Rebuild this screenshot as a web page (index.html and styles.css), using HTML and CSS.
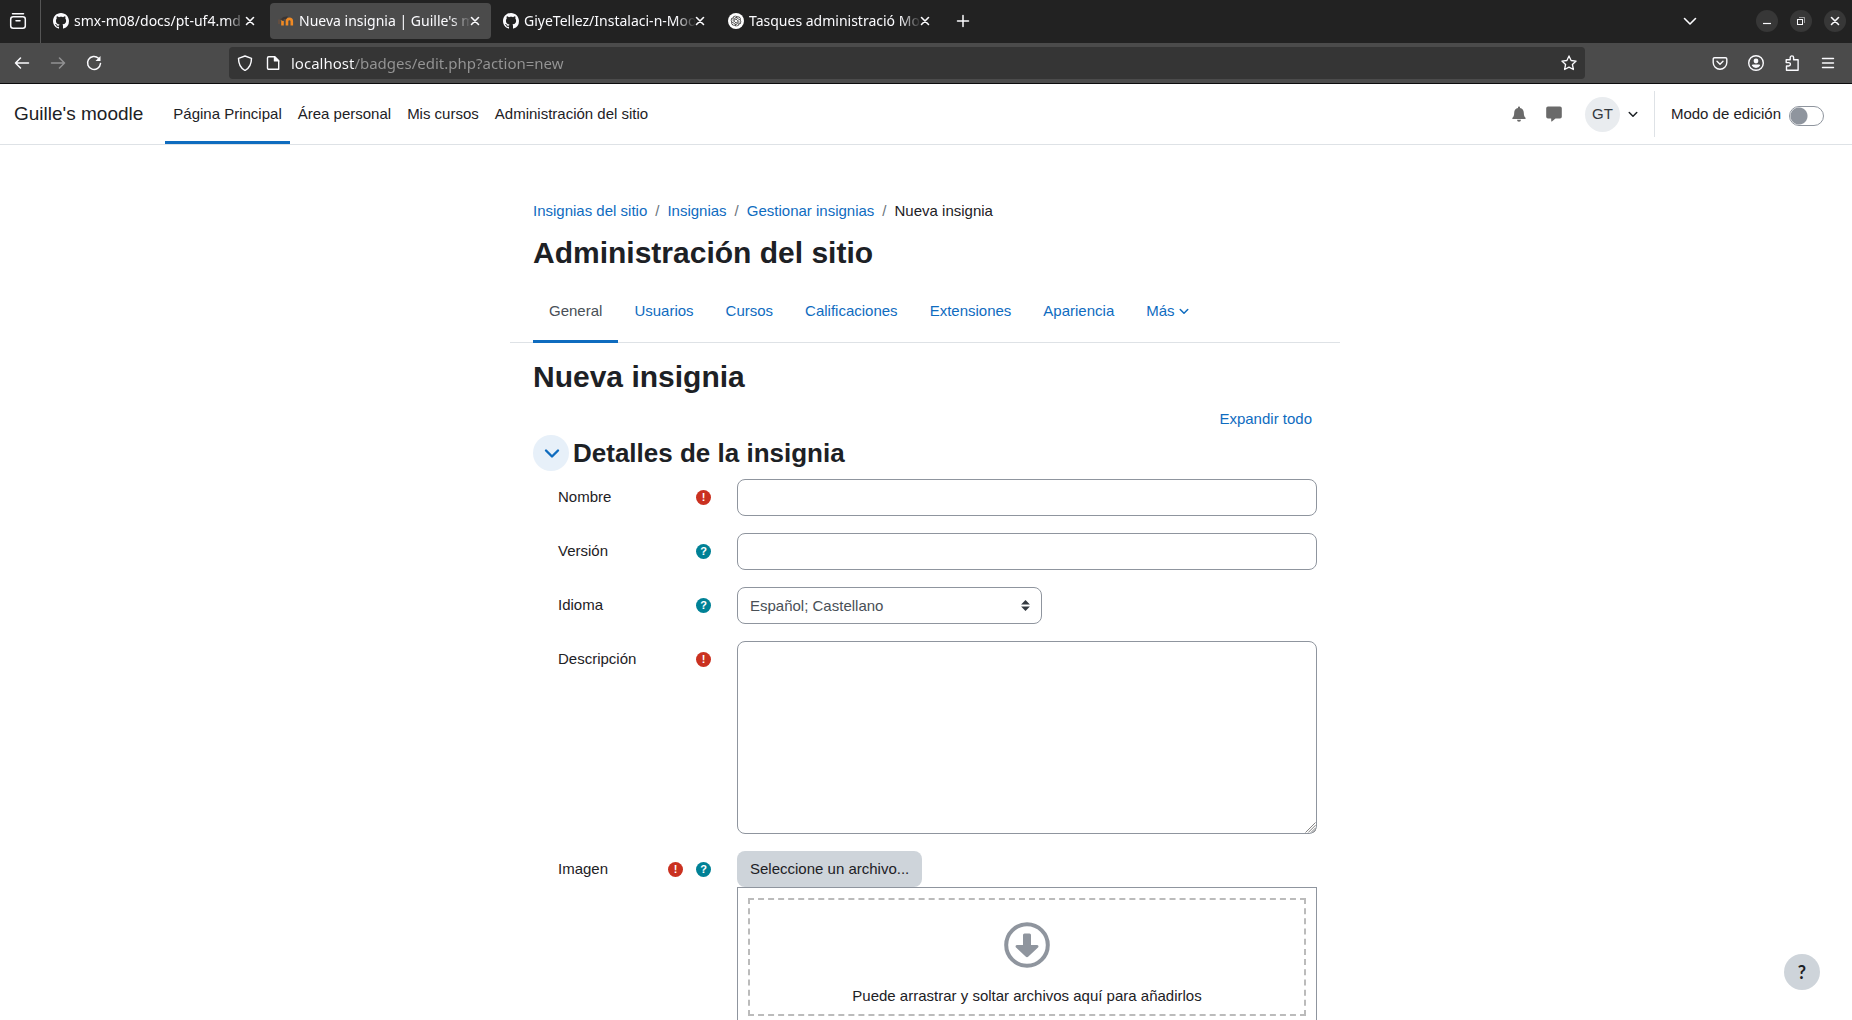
FILE: index.html
```html
<!DOCTYPE html>
<html lang="es">
<head>
<meta charset="utf-8">
<title>Nueva insignia | Guille's moodle</title>
<link rel="stylesheet" href="styles.css">
</head>
<body>
<svg class="defs" aria-hidden="true">
  <symbol id="i-close" viewBox="0 0 16 16"><path d="M4.5 4.5l7 7M11.5 4.5l-7 7" fill="none" stroke="currentColor" stroke-width="1.6" stroke-linecap="round"/></symbol>
  <symbol id="i-down" viewBox="0 0 16 16"><path d="M2.500 5.500l5.500 5.500 5.500-5.500" fill="none" stroke="currentColor" stroke-width="1.600" stroke-linecap="round" stroke-linejoin="round"/></symbol>
  <symbol id="i-chevron" viewBox="0 0 16 16"><path d="M2 5.500l6 6 6-6" fill="none" stroke="currentColor" stroke-width="2.400" stroke-linecap="round" stroke-linejoin="round"/></symbol>
  <symbol id="i-github" viewBox="0 0 16 16"><path fill="currentColor" d="M8 0C3.58 0 0 3.58 0 8c0 3.54 2.29 6.53 5.47 7.59.4.07.55-.17.55-.38 0-.19-.01-.82-.01-1.49-2.01.37-2.53-.49-2.69-.94-.09-.23-.48-.94-.82-1.13-.28-.15-.68-.52-.01-.53.63-.01 1.08.58 1.23.82.72 1.21 1.87.87 2.33.66.07-.52.28-.87.51-1.07-1.78-.2-3.64-.89-3.64-3.95 0-.87.31-1.59.82-2.15-.08-.2-.36-1.02.08-2.12 0 0 .67-.21 2.2.82.64-.18 1.32-.27 2-.27s1.36.09 2 .27c1.53-1.04 2.2-.82 2.2-.82.44 1.1.16 1.92.08 2.12.51.56.82 1.27.82 2.15 0 3.07-1.87 3.75-3.65 3.95.29.25.54.73.54 1.48 0 1.07-.01 1.93-.01 2.2 0 .21.15.46.55.38A8.01 8.01 0 0 0 16 8c0-4.42-3.58-8-8-8z"/></symbol>
</svg>

<div class="window">
  <header class="browser">
    <div class="tabbar">
      <button class="chrome-btn view-btn" aria-label="Vista de Firefox">
        <svg width="18" height="18" viewBox="0 0 18 18" fill="none" stroke="currentColor" stroke-width="1.500" stroke-linecap="round"><path d="M3.500 1.700h11"/><rect x="1.700" y="4.700" width="14.600" height="11.600" rx="2.500"/><path d="M7 8.700h4"/></svg>
      </button>
      <nav class="tabs" aria-label="Pestañas">
        <div class="tab">
          <svg class="icon16"><use href="#i-github"/></svg>
          <span class="tab-title">smx-m08/docs/pt-uf4.md</span>
          <button class="tab-close" aria-label="Cerrar"><svg class="icon16"><use href="#i-close"/></svg></button>
        </div>
        <div class="tab tab-active">
          <svg class="icon16" viewBox="0 0 16 16"><path d="M4.500 12.500V8M9 12.500V8.300a2.400 2.400 0 0 1 4.800 0v4.200" fill="none" stroke="#f08a24" stroke-width="2.600"/><path d="M3.200 7.500a3 3 0 0 1 4.300-1.500" fill="none" stroke="#f08a24" stroke-width="1.600"/><path d="M2 6.200L5.500 4l4.500-.8-2 3-4 1z" fill="#3a3534"/><path d="M1 6.500V11" stroke="#7a5238"/></svg>
          <span class="tab-title">Nueva insignia | Guille's m</span>
          <button class="tab-close" aria-label="Cerrar"><svg class="icon16"><use href="#i-close"/></svg></button>
        </div>
        <div class="tab">
          <svg class="icon16"><use href="#i-github"/></svg>
          <span class="tab-title">GiyeTellez/Instalaci-n-Moo</span>
          <button class="tab-close" aria-label="Cerrar"><svg class="icon16"><use href="#i-close"/></svg></button>
        </div>
        <div class="tab">
          <svg class="icon16" viewBox="0 0 36 36"><circle cx="18" cy="18" r="18" fill="#fff"/><path transform="translate(6 6)" fill="#222" d="M22.2819 9.8211a5.9847 5.9847 0 0 0-.5157-4.9108 6.0462 6.0462 0 0 0-6.5098-2.9A6.0651 6.0651 0 0 0 4.9807 4.1818a5.9847 5.9847 0 0 0-3.9977 2.9 6.0462 6.0462 0 0 0 .7427 7.0966 5.98 5.98 0 0 0 .511 4.9107 6.051 6.051 0 0 0 6.5146 2.9001A5.9847 5.9847 0 0 0 13.2599 24a6.0557 6.0557 0 0 0 5.7718-4.2058 5.9894 5.9894 0 0 0 3.9977-2.9001 6.0557 6.0557 0 0 0-.7475-7.0729zm-9.022 12.6081a4.4755 4.4755 0 0 1-2.8764-1.0408l.1419-.0804 4.7783-2.7582a.7948.7948 0 0 0 .3927-.6813v-6.7369l2.02 1.1686a.071.071 0 0 1 .038.052v5.5826a4.504 4.504 0 0 1-4.4945 4.4944zm-9.6607-4.1254a4.4708 4.4708 0 0 1-.5346-3.0137l.142.0852 4.783 2.7582a.7712.7712 0 0 0 .7806 0l5.8428-3.3685v2.3324a.0804.0804 0 0 1-.0332.0615L9.74 19.9502a4.4992 4.4992 0 0 1-6.1408-1.6464zM2.3408 7.8956a4.485 4.485 0 0 1 2.3655-1.9728V11.6a.7664.7664 0 0 0 .3879.6765l5.8144 3.3543-2.0201 1.1685a.0757.0757 0 0 1-.071 0l-4.8303-2.7865A4.504 4.504 0 0 1 2.3408 7.872zm16.5963 3.8558L13.1038 8.364 15.1192 7.2a.0757.0757 0 0 1 .071 0l4.8303 2.7913a4.4944 4.4944 0 0 1-.6765 8.1042v-5.6772a.79.79 0 0 0-.407-.667zm2.0107-3.0231l-.142-.0852-4.7735-2.7818a.7759.7759 0 0 0-.7854 0L9.409 9.2297V6.8974a.0662.0662 0 0 1 .0284-.0615l4.8303-2.7866a4.4992 4.4992 0 0 1 6.6802 4.66zM8.3065 12.863l-2.02-1.1638a.0804.0804 0 0 1-.038-.0567V6.0742a4.4992 4.4992 0 0 1 7.3757-3.4537l-.142.0805L8.704 5.459a.7948.7948 0 0 0-.3927.6813zm1.0976-2.3654l2.602-1.4998 2.6069 1.4998v2.9994l-2.5974 1.4997-2.6067-1.4997Z"/></svg>
          <span class="tab-title">Tasques administració Mo</span>
          <button class="tab-close" aria-label="Cerrar"><svg class="icon16"><use href="#i-close"/></svg></button>
        </div>
      </nav>
      <button class="chrome-btn" aria-label="Nueva pestaña">
        <svg width="16" height="16" viewBox="0 0 16 16" stroke="currentColor" stroke-width="1.500" stroke-linecap="round"><path d="M8 2.500v11M2.500 8h11"/></svg>
      </button>
      <button class="chrome-btn list-btn" aria-label="Listar pestañas"><svg class="icon16"><use href="#i-down"/></svg></button>
      <div class="win-controls">
        <button class="win-btn" aria-label="Minimizar"><svg class="icon16" viewBox="0 0 16 16" stroke="currentColor" stroke-width="1.200"><path d="M4 10.500h8"/></svg></button>
        <button class="win-btn" aria-label="Restaurar"><svg class="icon16" viewBox="0 0 16 16" fill="none" stroke="currentColor"><rect x="4.500" y="6.500" width="5" height="5"/><path d="M6 4.500h5.500V10" opacity=".5"/></svg></button>
        <button class="win-btn" aria-label="Cerrar ventana"><svg class="icon16"><use href="#i-close"/></svg></button>
      </div>
    </div>
    <div class="toolbar">
      <button class="chrome-btn" aria-label="Atrás"><svg class="icon16" viewBox="0 0 16 16" fill="none" stroke="currentColor" stroke-width="1.500" stroke-linecap="round" stroke-linejoin="round"><path d="M14.500 8h-13M6.500 3l-5 5 5 5"/></svg></button>
      <button class="chrome-btn" disabled aria-label="Adelante"><svg class="icon16" viewBox="0 0 16 16" fill="none" stroke="currentColor" stroke-width="1.500" stroke-linecap="round" stroke-linejoin="round"><path d="M1.500 8h13M9.500 3l5 5-5 5"/></svg></button>
      <button class="chrome-btn" aria-label="Recargar"><svg class="icon16" viewBox="0 0 16 16" fill="none" stroke="currentColor" stroke-width="1.500" stroke-linecap="round"><path d="M12.500 3.200A6.500 6.500 0 1 0 14.500 8.500"/><path d="M14.500 1v5h-5z" fill="currentColor" stroke="none"/></svg></button>
      <div class="urlbar">
        <svg class="icon16" viewBox="0 0 16 16" fill="none" stroke="currentColor" stroke-width="1.400" stroke-linejoin="round"><path d="M8 1l6.500 2.300c0 5.700-1.700 9.700-6.500 12.200C3.200 13 1.500 9 1.500 3.300z"/></svg>
        <svg class="icon16 doc-icon" viewBox="0 0 16 16" fill="none" stroke="currentColor" stroke-width="1.400" stroke-linejoin="round"><path d="M3.700 1.700h6l4 4v8.600h-10a1.200 1.200 0 0 1-1.200-1.200V2.900a1.200 1.200 0 0 1 1.200-1.200z"/><path d="M9.500 1.700v4.200h4.200z" fill="currentColor"/></svg>
        <input class="url" type="text" aria-label="Dirección" value="localhost/badges/edit.php?action=new">
        <button class="star" aria-label="Añadir a marcadores"><svg class="icon16" viewBox="0 0 16 16" fill="none" stroke="currentColor" stroke-width="1.300" stroke-linejoin="round"><path d="M8 .9l2.100 4.600 5 .6-3.700 3.400 1 5L8 12.100l-4.400 2.400 1-5L.9 6.100l5-.6z"/></svg></button>
      </div>
      <button class="chrome-btn" aria-label="Pocket"><svg class="icon16" viewBox="0 0 16 16" fill="none" stroke="currentColor" stroke-width="1.400" stroke-linecap="round" stroke-linejoin="round"><path d="M2.500 2.700h11a1.300 1.300 0 0 1 1.300 1.300v3.500a6.800 6.800 0 0 1-13.600 0V4a1.300 1.300 0 0 1 1.300-1.300z"/><path d="M5 6.300l3 3 3-3"/></svg></button>
      <button class="chrome-btn" aria-label="Cuenta"><svg class="icon16" viewBox="0 0 16 16"><circle cx="8" cy="8" r="7.300" fill="none" stroke="currentColor" stroke-width="1.400"/><circle cx="8" cy="6" r="2.400" fill="currentColor"/><path d="M3.800 10.500a1.300 1.300 0 0 1 1.200-1h6a1.300 1.300 0 0 1 1.200 1A5.200 5.200 0 0 1 8 13.100a5.200 5.200 0 0 1-4.200-2.600z" fill="currentColor"/></svg></button>
      <button class="chrome-btn" aria-label="Extensiones"><svg class="icon16" viewBox="0 0 16 16" fill="none" stroke="currentColor" stroke-width="1.400" stroke-linejoin="round"><path d="M2.500 15.200V11h2.200a1.700 1.700 0 0 0 0-3.400H2.200V4.700h4V2.600a1.700 1.700 0 0 1 3.400 0v2.100h4.500v10.500z"/></svg></button>
      <button class="chrome-btn" aria-label="Menú"><svg class="icon16" viewBox="0 0 16 16" stroke="currentColor" stroke-width="1.400" stroke-linecap="round"><path d="M2.500 3.500h11M2.500 8h11M2.500 12.500h11"/></svg></button>
    </div>
  </header>

  <div class="page">
    <header class="navbar">
      <a class="brand" href="#">Guille's moodle</a>
      <nav class="primary" aria-label="Navegación principal">
        <a class="active" href="#">Página Principal</a>
        <a href="#">Área personal</a>
        <a href="#">Mis cursos</a>
        <a href="#">Administración del sitio</a>
      </nav>
      <div class="usernav">
        <button class="nav-icon" aria-label="Notificaciones"><svg class="icon16" viewBox="0 0 16 16" fill="currentColor"><path d="M8 .5c.6 0 1 .4 1 1v.6c2.300.4 3.800 2.200 3.800 4.600 0 2.700.7 4 1.700 5 .5.500.2 1.300-.6 1.300H2.100c-.8 0-1.100-.8-.6-1.300 1-1 1.700-2.300 1.700-5 0-2.400 1.500-4.200 3.800-4.600v-.6c0-.6.4-1 1-1zM6 13.800h4a2 2 0 0 1-4 0z"/></svg></button>
        <button class="nav-icon" aria-label="Mensajes"><svg class="icon16" viewBox="0 0 16 16" fill="currentColor"><path d="M2 .500h12a1.800 1.800 0 0 1 1.800 1.800v8.400a1.800 1.800 0 0 1-1.800 1.800H9.500l-3.600 2.900a.4.4 0 0 1-.7-.3v-2.600H2a1.800 1.800 0 0 1-1.800-1.800V2.300A1.800 1.800 0 0 1 2 .5z"/></svg></button>
        <button class="user-menu" aria-label="Menú de usuario"><span class="avatar">GT</span><svg class="caret"><use href="#i-chevron"/></svg></button>
        <label class="editmode"><span>Modo de edición</span><input class="switch" type="checkbox" role="switch"></label>
      </div>
    </header>

    <main class="content">
      <nav class="breadcrumb" aria-label="Ruta">
        <a href="#">Insignias del sitio</a><span class="sep">/</span><a href="#">Insignias</a><span class="sep">/</span><a href="#">Gestionar insignias</a><span class="sep">/</span><span>Nueva insignia</span>
      </nav>
      <h1>Administración del sitio</h1>
      <nav class="secondary" aria-label="Administración">
        <a class="active" href="#">General</a>
        <a href="#">Usuarios</a>
        <a href="#">Cursos</a>
        <a href="#">Calificaciones</a>
        <a href="#">Extensiones</a>
        <a href="#">Apariencia</a>
        <a href="#">Más <svg class="caret"><use href="#i-chevron"/></svg></a>
      </nav>
      <h2>Nueva insignia</h2>
      <form class="form">
        <div class="expand"><a href="#">Expandir todo</a></div>
        <div class="section-head">
          <button type="button" class="collapse" aria-label="Contraer"><svg class="icon16"><use href="#i-chevron"/></svg></button>
          <h3>Detalles de la insignia</h3>
        </div>
        <div class="rows">
          <div class="row">
            <div class="row-label"><label for="name">Nombre</label><span class="badge required">!</span></div>
            <input class="field" id="name" type="text">
          </div>
          <div class="row">
            <div class="row-label"><label for="version">Versión</label><button type="button" class="badge help">?</button></div>
            <input class="field" id="version" type="text">
          </div>
          <div class="row">
            <div class="row-label"><label for="language">Idioma</label><button type="button" class="badge help">?</button></div>
            <div class="select-wrap">
              <select class="field" id="language"><option>Español; Castellano</option></select>
              <svg class="updown" viewBox="0 0 8 10" fill="#343a40"><path d="M4 0l4 4H0zM4 10L0 6h8z"/></svg>
            </div>
          </div>
          <div class="row">
            <div class="row-label"><label for="description">Descripción</label><span class="badge required">!</span></div>
            <div class="textarea-wrap">
              <textarea class="field" id="description"></textarea>
              <svg class="grip" viewBox="0 0 12 12" stroke="#777" fill="none"><path d="M.5 11.500l11-11M3.500 11.500l8-8M6.500 11.500l5-5M9 11.500l2.500-2.500"/></svg>
            </div>
          </div>
          <div class="row">
            <div class="row-label"><label for="image">Imagen</label><span class="badge required">!</span><button type="button" class="badge help">?</button></div>
            <div class="filepicker">
              <button type="button" class="pick" id="image">Seleccione un archivo...</button>
              <div class="dropbox">
                <div class="dropzone">
                  <svg width="46" height="46" viewBox="0 0 46 46"><circle cx="23" cy="23" r="20.800" fill="none" stroke="#8f959e" stroke-width="4"/><path d="M20.500 11.500h5a1.500 1.500 0 0 1 1.500 1.500v10h6a1.400 1.400 0 0 1 1 2.400l-9.600 9.200a2 2 0 0 1-2.800 0L12 25.400a1.400 1.400 0 0 1 1-2.400h6V13a1.500 1.500 0 0 1 1.500-1.500z" fill="#8f959e"/></svg>
                  <p>Puede arrastrar y soltar archivos aquí para añadirlos</p>
                </div>
              </div>
            </div>
          </div>
        </div>
      </form>
    </main>
    <button class="fab" aria-label="Ayuda">?</button>
  </div>
</div>
</body>
</html>
```

FILE: styles.css
```css
* { box-sizing: border-box; }
body { margin: 0; font: 15px/22px "Liberation Sans", Arial, sans-serif; color: #1d2125; background: #fff; }
button { font: inherit; color: inherit; background: none; border: 0; padding: 0; margin: 0; }
a { color: #0f6cbf; text-decoration: none; }
svg { flex: none; display: block; }
.defs { display: none; }
.icon16 { width: 16px; height: 16px; }
.window { display: flex; flex-direction: column; height: 100vh; overflow: hidden; }

/* Browser frame */
.browser { flex: none; color: #fbfbfe; font: 15px/20px "Noto Sans", sans-serif; border-bottom: 1px solid #0c0c0d; }
.tabbar { display: flex; align-items: center; height: 43px; padding: 0 6px 1px 0; background: #222; }
.chrome-btn { display: flex; align-items: center; justify-content: center; width: 36px; height: 36px; flex: none; }
.chrome-btn:disabled { opacity: .4; }
.view-btn { width: 41px; height: 43px; padding-right: 5px; border-right: 1px solid #555; }
.tabs { display: flex; gap: 4px; padding: 0 4px; }
.tab { display: flex; align-items: center; width: 221px; height: 36px; padding-left: 8px; border-radius: 4px; }
.tab-active { background: #4b4b4b; }
.tab-title { flex: 1; min-width: 0; margin-left: 5px; font-size: 14px; overflow: hidden; white-space: nowrap; mask-image: linear-gradient(to left, transparent, #000 20px); }
.tab-close { margin: 0 8px 0 -4px; }
.list-btn { margin-left: auto; }
.win-controls { display: flex; gap: 12px; margin-left: 48px; }
.win-btn { display: flex; align-items: center; justify-content: center; width: 22px; height: 22px; border-radius: 50%; background: #373737; }
.toolbar { display: flex; align-items: center; height: 40px; padding: 0 6px 0 4px; background: #4b4b4b; }
.urlbar { flex: 1; display: flex; align-items: center; height: 32px; margin: 0 117px; padding: 0 8px; border-radius: 4px; background: #353535; }
.doc-icon { margin-left: 12px; }
.url { flex: 1; min-width: 0; margin-left: 10px; padding: 0; border: 0; outline: 0; font: inherit; color: transparent; background: linear-gradient(to right, #fbfbfe 64px, #959595 64px); -webkit-background-clip: text; background-clip: text; }

/* Site navigation bar */
.page { flex: 1; min-height: 0; }
.navbar { display: flex; align-items: stretch; height: 61px; padding: 0 28px 0 14px; border-bottom: 1px solid #dee2e6; }
.navbar a { display: flex; align-items: center; color: #1d2125; }
.brand { font-size: 19px; margin-right: 22px; }
.primary { display: flex; }
.primary a { padding: 3px 8px 0; border-bottom: 3px solid transparent; }
.primary .active { border-color: #0f6cbf; }
.usernav { display: flex; align-items: center; margin-left: auto; }
.nav-icon { width: 35px; display: flex; justify-content: center; color: #6a6a6a; }
.user-menu { display: flex; align-items: center; gap: 8px; margin: 0 16px 0 13px; }
.avatar { display: flex; align-items: center; justify-content: center; width: 35px; height: 35px; border-radius: 50%; background: #e9ecef; color: #343a40; }
.caret { width: 10px; height: 10px; }
.editmode { display: flex; align-items: center; gap: 8px; height: 46px; padding-left: 16px; border-left: 1px solid #dee2e6; }
.switch { appearance: none; width: 35px; height: 20px; margin: 4px 0 0; border: 1px solid #8f959e; border-radius: 10px; background: radial-gradient(circle at 9px 9px, #8f959e 8px, transparent 9px); }

/* Page content */
.content { width: 832px; max-width: 100%; margin: 0 auto; padding: 55px 25px 0 23px; }
.breadcrumb { display: flex; }
.sep { margin: 0 8px; color: #6a737b; }
h1, h2, h3 { margin: 0; font-weight: 700; }
h1, h2 { font-size: 30px; line-height: 36px; }
h3 { font-size: 26px; line-height: 36px; }
h1 { margin-top: 13px; }
.secondary { display: flex; height: 64px; margin: 8px -23px 16px; padding: 0 23px; border-bottom: 1px solid #dee2e6; }
.secondary a { display: flex; align-items: center; gap: 4px; height: 64px; padding: 3px 16px 0; border-bottom: 3px solid transparent; }
.secondary .active { color: #495057; border-color: #0f6cbf; }
.expand { display: flex; justify-content: flex-end; padding-right: 5px; margin: 13px 0 5px; }
.section-head { display: flex; align-items: center; gap: 4px; }
.collapse { display: flex; align-items: center; justify-content: center; width: 36px; height: 36px; padding-left: 2px; border-radius: 50%; background: #e7f0f9; color: #0f6cbf; }
.rows { display: flex; flex-direction: column; gap: 17px; padding: 8px 0 0 25px; }
.row { display: grid; grid-template-columns: 153px 1fr; gap: 26px; }
.row-label { display: flex; align-items: center; gap: 13px; height: 36px; }
.row-label label { margin-right: auto; }
.badge { display: flex; align-items: center; justify-content: center; width: 15px; height: 15px; border-radius: 50%; color: #fff; font-size: 11px; line-height: 15px; font-weight: 700; }
.required { background: #ca3120; }
.help { background: #008196; }
.field { display: block; width: 100%; height: 37px; margin: 0; padding: 0 12px; border: 1px solid #8f959e; border-radius: 8px; background: #fff; color: #495057; font: inherit; }
.select-wrap { position: relative; width: 305px; }
.select-wrap .field { appearance: none; }
.updown { position: absolute; right: 12px; top: 13px; width: 9px; height: 11px; pointer-events: none; }
.textarea-wrap { position: relative; }
.textarea-wrap .field { height: 193px; resize: none; }
.grip { position: absolute; right: 1px; bottom: 1px; width: 11px; height: 11px; pointer-events: none; }
.pick { display: block; height: 36px; padding: 0 13px; border-radius: 8px; background: #ced4da; }
.dropbox { padding: 10px; border: 1px solid #8f959e; }
.dropzone { display: flex; flex-direction: column; align-items: center; padding: 22px 0 7px; border: 2px dashed #bbb; }
.dropzone p { margin: 17px 0 0; }
.fab { position: fixed; right: 32px; bottom: 30px; width: 36px; height: 36px; border-radius: 50%; background: #ced4da; font: 700 18px/36px Lato, sans-serif; }
```
